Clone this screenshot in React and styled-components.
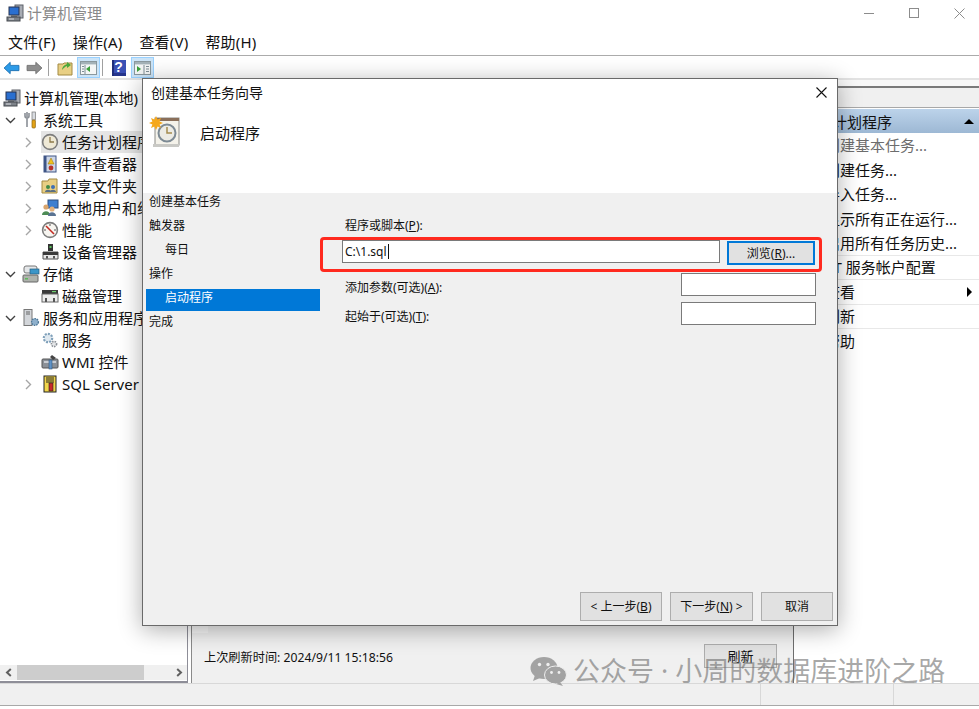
import React from 'react';
import styled, { createGlobalStyle } from 'styled-components';

const GlobalStyle = createGlobalStyle`
  html, body { margin: 0; padding: 0; background: #fff; }
  body { font-family: "Noto Sans", "Noto Sans CJK SC", sans-serif; color: #111; }
  * { box-sizing: border-box; }
`;

// icons
const ComputerIcon = () => (
  <svg width="18" height="18" viewBox="0 0 18 18">
    <rect x="9" y="1" width="8" height="13" fill="#a8acb4" stroke="#5c6068" />
    <rect x="3" y="3" width="10" height="8" fill="#2a6fd0" stroke="#27334f" />
    <rect x="5" y="11" width="6" height="2" fill="#6b7078" />
    <rect x="1" y="13" width="13" height="4" fill="#7e838a" stroke="#44484e" />
    <rect x="3" y="14.5" width="5" height="1" fill="#d8dade" />
  </svg>
);
const ToolsIcon = () => (
  <svg width="18" height="18" viewBox="0 0 18 18">
    <path d="M5 1v5M3 2v3a2 2 0 0 0 4 0V2M5 7v9" stroke="#8a8f96" strokeWidth="1.6" fill="none" />
    <rect x="10" y="1" width="3.4" height="8" fill="#d8dbe0" stroke="#777" strokeWidth=".7" />
    <rect x="10" y="9" width="3.4" height="8" rx="1" fill="#e3a316" stroke="#8c6410" strokeWidth=".7" />
  </svg>
);
const ClockIcon = () => (
  <svg width="18" height="18" viewBox="0 0 18 18">
    <circle cx="9" cy="9" r="7.4" fill="#efe9d6" stroke="#7d7d7d" strokeWidth="1.6" />
    <path d="M9 4v5h4" stroke="#8d7a4a" strokeWidth="1.3" fill="none" />
  </svg>
);
const EventIcon = () => (
  <svg width="18" height="18" viewBox="0 0 18 18">
    <rect x="3" y="1" width="12" height="16" fill="#cdd6e6" stroke="#3e5585" />
    <rect x="3" y="1" width="2.5" height="16" fill="#3e5585" />
    <path d="M10 3l3 6H7z" fill="#f1c11c" stroke="#93700d" strokeWidth=".5" />
    <circle cx="10" cy="13" r="2.4" fill="#b8332a" />
  </svg>
);
const ShareIcon = () => (
  <svg width="18" height="18" viewBox="0 0 18 18">
    <path d="M1 4h6l1-2h8v14H1z" fill="#e8cf84" stroke="#a38a42" />
    <circle cx="7" cy="10" r="2" fill="#3f8a47" />
    <circle cx="12" cy="10" r="2" fill="#3e6fb5" />
    <path d="M4 15c0-3 6-3 6 0zM9 15c0-3 6-3 6 0z" fill="#5a6f82" />
  </svg>
);
const UsersIcon = () => (
  <svg width="18" height="18" viewBox="0 0 18 18">
    <rect x="7" y="1" width="10" height="8" fill="#3e7fd0" stroke="#2d4f80" />
    <circle cx="5" cy="8" r="2.6" fill="#d9a56d" />
    <path d="M1 16c0-5 8-5 8 0z" fill="#4d8c55" />
    <circle cx="11" cy="10" r="2.6" fill="#e2b17c" />
    <path d="M7 17c0-5 8-5 8 0z" fill="#5a7392" />
  </svg>
);
const PerfIcon = () => (
  <svg width="18" height="18" viewBox="0 0 18 18">
    <circle cx="9" cy="9" r="7.4" fill="#f7f5f0" stroke="#7d7d7d" strokeWidth="1.6" />
    <path d="M5 5l8 8" stroke="#c22a22" strokeWidth="1.6" />
    <path d="M9 3v2M3 9h2M13 9h2" stroke="#555" />
  </svg>
);
const DeviceIcon = () => (
  <svg width="18" height="18" viewBox="0 0 18 18">
    <rect x="7" y="1" width="5" height="7" fill="#333" />
    <rect x="8.5" y="3" width="2" height="2" fill="#5bc35b" />
    <path d="M2 9h15v7H2z" fill="#e8e8e8" stroke="#555" />
    <rect x="2" y="9" width="15" height="3" fill="#3a3a3a" />
    <rect x="5" y="13" width="2" height="2.5" fill="#555" />
    <rect x="12" y="13" width="2" height="2.5" fill="#555" />
  </svg>
);
const StorageIcon = () => (
  <svg width="18" height="18" viewBox="0 0 18 18">
    <rect x="2" y="1" width="13" height="7" rx="2" fill="#e4e6e8" stroke="#777" />
    <rect x="8" y="4" width="9" height="5" fill="#3b96c8" stroke="#25607f" strokeWidth=".7" />
    <rect x="1" y="10" width="15" height="7" rx="1" fill="#aeb2ac" stroke="#666" />
    <rect x="3" y="13" width="3" height="1.5" fill="#5cba5c" />
  </svg>
);
const DiskIcon = () => (
  <svg width="18" height="18" viewBox="0 0 18 18">
    <rect x="1" y="3" width="16" height="4" fill="#3a3a3a" />
    <rect x="11" y="4" width="4" height="1.2" fill="#6fd06f" />
    <rect x="1" y="7" width="16" height="8" fill="#ededed" stroke="#666" />
    <rect x="4" y="11" width="2" height="4" fill="#555" />
    <rect x="12" y="11" width="2" height="4" fill="#555" />
  </svg>
);
const ServerAppIcon = () => (
  <svg width="18" height="18" viewBox="0 0 18 18">
    <rect x="2" y="0.5" width="8" height="16" fill="#d3d6da" stroke="#777" />
    <path d="M4 3h4M4 5h4" stroke="#666" />
    <circle cx="13" cy="13" r="3.4" fill="#8fb0cc" stroke="#4f7897" strokeWidth="1.4" strokeDasharray="1.5 1" />
  </svg>
);
const GearIcon = () => (
  <svg width="18" height="18" viewBox="0 0 18 18">
    <circle cx="7" cy="7" r="4.2" fill="#dfe8ef" stroke="#7fa0ba" strokeWidth="2.2" strokeDasharray="2 1.2" />
    <circle cx="13" cy="13" r="2.6" fill="#e4e6e8" stroke="#8a8f96" strokeWidth="1.6" strokeDasharray="1.5 1" />
  </svg>
);
const WmiIcon = () => (
  <svg width="18" height="18" viewBox="0 0 18 18">
    <rect x="1" y="6" width="16" height="9" rx="1" fill="#8b9097" stroke="#555" />
    <rect x="3" y="8" width="12" height="2" fill="#c8ccd2" />
    <path d="M11 2l4 3-3 2-3-3z" fill="#444" />
    <rect x="8" y="7" width="3" height="9" fill="#5f93c8" stroke="#33587e" strokeWidth=".6" />
  </svg>
);
const SqlIcon = () => (
  <svg width="18" height="18" viewBox="0 0 18 18">
    <rect x="3" y="1" width="12" height="16" fill="#f2d64b" stroke="#222" />
    <path d="M5 3h8M5 5h8M5 7h8" stroke="#222" />
    <rect x="8" y="8" width="4" height="8" fill="#c92a2a" stroke="#222" strokeWidth=".6" />
  </svg>
);
const WizardIcon = () => (
  <svg width="32" height="32" viewBox="0 0 32 32">
    <rect x="6" y="2" width="24" height="27" fill="#f4f2ea" stroke="#8c8c88" />
    <rect x="6" y="2" width="24" height="3" fill="#8a6f5a" />
    <rect x="4" y="28" width="26" height="3" fill="#c9c9c5" />
    <circle cx="18" cy="17" r="8.5" fill="#ecebe4" stroke="#7d8a94" strokeWidth="2" />
    <path d="M18 11v6h5" stroke="#a48c4e" strokeWidth="1.5" fill="none" />
    <path d="M7 0l1.6 3.4L12 2l-1.4 3.6L14 7l-3.4 1.4L12 12 8.6 10.4 7 14l-1.6-3.6L2 12l1.4-3.6L0 7l3.4-1.4L2 2l3.4 1.4z" fill="#f5a81c" />
  </svg>
);
const ArrowIcon = ({ $dir, $color, $edge }) => (
  <svg width="17" height="14" viewBox="0 0 19 16" style={{ transform: $dir === 'right' ? 'scaleX(-1)' : 'none' }}>
    <path d="M1 8l7-6.5V5h10v6H8v3.5z" fill={$color} stroke={$edge} />
  </svg>
);
const FolderUpIcon = () => (
  <svg width="16" height="16" viewBox="0 0 16 16">
    <path d="M1 4h5l1-1h8v12H1z" fill="#e8cf84" stroke="#a38a42" />
    <path d="M5 10c0-3 2-5 5-6V2l4 3-4 3V6c-2 .5-3 2-5 4z" fill="#4aa83c" />
  </svg>
);
const PaneIcon = ({ $color, $right }) => (
  <svg width="17" height="14" viewBox="0 0 17 14">
    <rect x=".5" y=".5" width="16" height="13" fill="#f4f6f6" stroke="#8a989e" />
    <rect x="1" y="1" width="15" height="2.4" fill="#a4b2b8" />
    <path d={$right ? 'M3 5v6l4-3z' : 'M10 5v6L6 8z'} fill={$color} />
    <path d={$right ? 'M10 4v9M12 5.5h3M12 8h3M12 10.5h3' : 'M2 5.5h2M2 8h2M2 10.5h2M5 4v9'} stroke="#7e8e96" />
  </svg>
);
const HelpIcon = () => (
  <svg width="14" height="16" viewBox="0 0 14 16">
    <rect width="14" height="16" fill="#3a50b4" />
    <rect width="2" height="16" fill="#1f2d7a" />
    <rect x="2" y="13" width="12" height="3" fill="#26358c" />
  </svg>
);
const ChevronRight = () => (
  <svg width="9" height="11" viewBox="0 0 9 11">
    <path d="M2 1l4.5 4.5L2 10" fill="none" stroke="#a6a6a6" strokeWidth="1.4" />
  </svg>
);
const ChevronDown = () => (
  <svg width="11" height="9" viewBox="0 0 11 9">
    <path d="M1 2l4.5 4.5L10 2" fill="none" stroke="#404040" strokeWidth="1.4" />
  </svg>
);
const ScrollArrow = ({ $left }) => (
  <svg width="7" height="9" viewBox="0 0 7 9">
    <path d={$left ? 'M5.8 1L2 4.5 5.8 8' : 'M1.2 1L5 4.5 1.2 8'} fill="none" stroke="#606060" strokeWidth="2" />
  </svg>
);
const WechatIcon = () => (
  <svg width="37" height="29" viewBox="0 0 37 29">
    <ellipse cx="14" cy="11" rx="13.5" ry="11" fill="#a3a3a3" />
    <path d="M5 18l-2 6 7-3z" fill="#a3a3a3" />
    <ellipse cx="25.5" cy="18" rx="11" ry="9" fill="#a3a3a3" stroke="#efefef" />
    <path d="M30 25l3 4-7-2z" fill="#a3a3a3" />
    <circle cx="9.5" cy="7.5" r="1.7" fill="#efefef" />
    <circle cx="18" cy="7.5" r="1.7" fill="#efefef" />
    <circle cx="21.5" cy="15.5" r="1.4" fill="#efefef" />
    <circle cx="29" cy="15.5" r="1.4" fill="#efefef" />
  </svg>
);

// data
const treeData = [
  { level: 0, Icon: ComputerIcon, label: '计算机管理(本地)' },
  { level: 1, Icon: ToolsIcon, label: '系统工具', toggle: 'open' },
  { level: 2, Icon: ClockIcon, label: '任务计划程序', toggle: 'closed', selected: true },
  { level: 2, Icon: EventIcon, label: '事件查看器', toggle: 'closed' },
  { level: 2, Icon: ShareIcon, label: '共享文件夹', toggle: 'closed' },
  { level: 2, Icon: UsersIcon, label: '本地用户和组', toggle: 'closed' },
  { level: 2, Icon: PerfIcon, label: '性能', toggle: 'closed' },
  { level: 2, Icon: DeviceIcon, label: '设备管理器' },
  { level: 1, Icon: StorageIcon, label: '存储', toggle: 'open' },
  { level: 2, Icon: DiskIcon, label: '磁盘管理' },
  { level: 1, Icon: ServerAppIcon, label: '服务和应用程序', toggle: 'open' },
  { level: 2, Icon: GearIcon, label: '服务' },
  { level: 2, Icon: WmiIcon, label: 'WMI 控件' },
  { level: 2, Icon: SqlIcon, label: 'SQL Server', toggle: 'closed' },
];

const actions = [
  { label: '创建基本任务...', disabled: true },
  { label: '创建任务...' },
  { label: '导入任务...' },
  { label: '显示所有正在运行...' },
  { label: '启用所有任务历史...', divider: true },
  { label: 'AT 服务帐户配置', divider: true },
  { label: '查看', more: true, divider: true },
  { label: '刷新', divider: true },
  { label: '帮助' },
];

const steps = [
  { label: '创建基本任务' },
  { label: '触发器' },
  { label: '每日', sub: true },
  { label: '操作' },
  { label: '启动程序', sub: true, active: true },
  { label: '完成' },
];

const App = () => {
  return (
    <Window>
      <GlobalStyle />
      <TitleBar>
        <ComputerIcon />
        <TitleText>计算机管理</TitleText>
        <WindowControls>
          <MinimizeGlyph />
          <MaximizeGlyph />
          <CloseGlyph>
            <svg width="11" height="11" viewBox="0 0 11 11">
              <path d="M.5.5l10 10M10.5.5l-10 10" stroke="currentColor" />
            </svg>
          </CloseGlyph>
        </WindowControls>
      </TitleBar>
      <MenuBar>
        <MenuItem>文件(F)</MenuItem>
        <MenuItem>操作(A)</MenuItem>
        <MenuItem>查看(V)</MenuItem>
        <MenuItem>帮助(H)</MenuItem>
      </MenuBar>
      <Toolbar>
        <ToolButton><ArrowIcon $color="#2d9be8" $edge="#1c6fb0" /></ToolButton>
        <ToolButton><ArrowIcon $dir="right" $color="#8e8e8e" $edge="#6e6e6e" /></ToolButton>
        <ToolSeparator />
        <ToolButton><FolderUpIcon /></ToolButton>
        <ToolButton $on $left={1}><PaneIcon $color="#3aa03a" /></ToolButton>
        <ToolSeparator />
        <ToolButton><HelpIcon /><HelpMark>?</HelpMark></ToolButton>
        <ToolButton $on $left={1}><PaneIcon $color="#3aa03a" $right /></ToolButton>
      </Toolbar>
      <Main>
        <TreePane>
          <TreeList>
            {treeData.map((item) => (
              <TreeRow key={item.label} $level={item.level}>
                {item.level > 0 && (
                  <ToggleSlot>
                    {item.toggle === 'open' && <ChevronDown />}
                    {item.toggle === 'closed' && <ChevronRight />}
                  </ToggleSlot>
                )}
                <TreeLabel $selected={item.selected}>
                  <item.Icon />
                  <span>{item.label}</span>
                </TreeLabel>
              </TreeRow>
            ))}
          </TreeList>
          <HScrollBar>
            <ScrollArrow $left />
            <HScrollThumb />
            <ScrollArrow />
          </HScrollBar>
        </TreePane>
        <CenterPane>
          <PaneBand />
          <CenterBody />
          <ListScroll>
            <ScrollStub />
          </ListScroll>
          <CenterFooter>
            <span>上次刷新时间: 2024/9/11 15:18:56</span>
            <RefreshButton>刷新</RefreshButton>
          </CenterFooter>
        </CenterPane>
        <ActionPane>
          <PaneBand />
          <ActionHeader>
            <span>任务计划程序</span>
            <UpTriangle />
          </ActionHeader>
          {actions.map((action) => (
            <ActionRow key={action.label} $disabled={action.disabled} $divider={action.divider}>
              <span>{action.label}</span>
              {action.more && <RightTriangle />}
            </ActionRow>
          ))}
        </ActionPane>
      </Main>
      <StatusBar>
        <StatusCell $width={761} />
        <StatusCell $width={133} />
        <StatusCell $width={85} />
      </StatusBar>

      <Dialog>
        <DialogHead>
          <DialogTitleRow>
            <span>创建基本任务向导</span>
            <DialogClose>
              <svg width="11" height="11" viewBox="0 0 11 11">
                <path d="M.5.5l10 10M10.5.5l-10 10" stroke="#111" strokeWidth="1.1" />
              </svg>
            </DialogClose>
          </DialogTitleRow>
          <DialogHeading>
            <WizardIcon />
            <HeadingText>启动程序</HeadingText>
          </DialogHeading>
        </DialogHead>
        <DialogBody>
          <StepList>
            {steps.map((step) => (
              <Step key={step.label} $sub={step.sub} $active={step.active}>{step.label}</Step>
            ))}
          </StepList>
          <FormArea>
            <FieldLabel $indent>程序或脚本(<u>P</u>):</FieldLabel>
            <Highlight>
              <PathInput>C:\1.sql<Caret /></PathInput>
              <BrowseButton>浏览(<u>R</u>)...</BrowseButton>
            </Highlight>
            <ArgRow $top={1}>
              <FieldLabel>添加参数(可选)(<u>A</u>):</FieldLabel>
              <ArgInput />
            </ArgRow>
            <ArgRow $top={6}>
              <FieldLabel>起始于(可选)(<u>T</u>):</FieldLabel>
              <ArgInput />
            </ArgRow>
          </FormArea>
        </DialogBody>
        <DialogFooter>
          <FooterButton $width={82}>&lt; 上一步(<u>B</u>)</FooterButton>
          <FooterButton $width={83}>下一步(<u>N</u>) &gt;</FooterButton>
          <FooterButton $width={72}>取消</FooterButton>
        </DialogFooter>
      </Dialog>

      <Watermark>
        <WechatIcon />
        <WatermarkText>公众号 · 小周的数据库进阶之路</WatermarkText>
      </Watermark>
    </Window>
  );
};

export default App;

const Window = styled.div`
  position: relative;
  width: 979px;
  height: 709px;
  overflow: hidden;
  display: flex;
  flex-direction: column;
  background: #fff;
`;

const TitleBar = styled.div`
  height: 28px;
  display: flex;
  align-items: center;
  padding: 0 0 2px 6px;
  gap: 3px;
`;

const TitleText = styled.div`
  font-size: 15px;
  line-height: 20px;
  color: #8a8a8a;
`;

const WindowControls = styled.div`
  margin-left: auto;
  display: flex;
  align-items: center;
  gap: 35px;
  padding-right: 14px;
  color: #8c8c8c;
`;

const MinimizeGlyph = styled.div`
  width: 10px;
  height: 1px;
  background: #8c8c8c;
`;

const MaximizeGlyph = styled.div`
  width: 10px;
  height: 10px;
  border: 1px solid #8c8c8c;
`;

const CloseGlyph = styled.div`
  display: flex;
`;

const MenuBar = styled.div`
  height: 28px;
  display: flex;
  align-items: center;
  padding-left: 8px;
  gap: 17px;
  border-bottom: 1px solid #ababab;
`;

const MenuItem = styled.div`
  font-size: 15px;
  line-height: 20px;
  letter-spacing: 0.2px;
  color: #111;
`;

const Toolbar = styled.div`
  height: 22px;
  display: flex;
  align-items: center;
  background: #fff;
`;

const ToolButton = styled.div`
  position: relative;
  width: 23px;
  height: 21px;
  margin-top: 1px;
  margin-left: ${(p) => p.$left || 0}px;
  display: flex;
  align-items: center;
  justify-content: center;
  background: ${(p) => (p.$on ? '#cce4f7' : 'transparent')};
  border: 1px solid ${(p) => (p.$on ? '#99d1ff' : 'transparent')};
`;

const HelpMark = styled.span`
  position: absolute;
  inset: 0;
  text-align: center;
  font-family: "Liberation Sans", sans-serif;
  font-weight: 700;
  font-size: 14px;
  line-height: 19px;
  color: #fff;
`;

const ToolSeparator = styled.div`
  width: 1px;
  height: 17px;
  background: #a0a0a0;
  margin: 0 4px 0 2px;
`;

const Main = styled.div`
  flex: 1;
  min-height: 0;
  display: flex;
  border-top: 2px solid #e3e3e3;
`;

const TreePane = styled.div`
  width: 188px;
  display: flex;
  flex-direction: column;
  border-right: 1px solid #8e8e98;
  border-bottom: 2px solid #8e8e98;
  overflow: hidden;
`;

const TreeList = styled.div`
  flex: 1;
  padding-top: 7px;
`;

const TreeRow = styled.div`
  height: 22px;
  display: flex;
  align-items: center;
  white-space: nowrap;
  font-size: 15px;
  padding-left: ${(p) => (p.$level === 0 ? 3 : p.$level === 1 ? 5 : 24)}px;
`;

const ToggleSlot = styled.div`
  width: 17px;
  flex-shrink: 0;
  display: flex;
`;

const TreeLabel = styled.div`
  flex-shrink: 0;
  display: flex;
  align-items: center;
  gap: 3px;
  height: 22px;
  padding-right: 4px;
  line-height: 20px;
  background: ${(p) => (p.$selected ? '#e5e5e5' : 'transparent')};
`;

const HScrollBar = styled.div`
  height: 15px;
  margin: 0 0 1px 0;
  padding: 0 4px 0 5px;
  display: flex;
  align-items: center;
  background: #f0f0f0;
`;

const HScrollThumb = styled.div`
  width: 127px;
  height: 15px;
  margin: 0 auto 0 5px;
  background: #cdcdcd;
`;

const CenterPane = styled.div`
  flex: 1;
  min-width: 0;
  margin-left: 3px;
  display: flex;
  flex-direction: column;
  background: #f0f0f0;
  border-left: 1px solid #8a8a8a;
  border-right: 1px solid #6e6e6e;
`;

const PaneBand = styled.div`
  height: 28px;
  flex-shrink: 0;
  background: linear-gradient(#f8f8f8 0, #f8f8f8 6px, #7a7a7a 6px, #7a7a7a 8px, #f0f0f0 8px, #f0f0f0 27px, #a8a8a8 27px, #a8a8a8 28px);
`;

const CenterBody = styled.div`
  flex: 1;
`;

const ListScroll = styled.div`
  height: 8px;
  display: flex;
`;

const ScrollStub = styled.div`
  width: 16px;
  background: #f8f8f8;
`;

const CenterFooter = styled.div`
  height: 50px;
  display: flex;
  align-items: flex-start;
  justify-content: space-between;
  padding: 11px 16px 0 12px;
  font-size: 12.2px;
  line-height: 28px;
`;

const RefreshButton = styled.div`
  width: 73px;
  height: 24px;
  background: #e1e1e1;
  border: 1px solid #adadad;
  font-size: 13px;
  line-height: 22px;
  text-align: center;
`;

const ActionPane = styled.div`
  width: 185px;
  display: flex;
  flex-direction: column;
`;

const ActionHeader = styled.div`
  height: 24px;
  flex-shrink: 0;
  display: flex;
  align-items: center;
  justify-content: space-between;
  padding: 1px 5px 0 8px;
  margin-top: 1px;
  font-size: 15px;
  line-height: 20px;
  background: linear-gradient(#bcd3ea, #9db8d4);
  color: #111;
`;

const UpTriangle = styled.div`
  width: 0;
  height: 0;
  border-left: 5px solid transparent;
  border-right: 5px solid transparent;
  border-bottom: 5px solid #000;
`;

const RightTriangle = styled.div`
  width: 0;
  height: 0;
  border-top: 5px solid transparent;
  border-bottom: 5px solid transparent;
  border-left: 5px solid #000;
`;

const ActionRow = styled.div`
  height: 24.5px;
  flex-shrink: 0;
  display: flex;
  align-items: center;
  justify-content: space-between;
  padding: 0 7px 0 31px;
  font-size: 15px;
  line-height: 20px;
  white-space: nowrap;
  color: ${(p) => (p.$disabled ? '#6d6d6d' : '#111')};
  border-bottom: ${(p) => (p.$divider ? '1px solid #e8e8e8' : 'none')};
`;

const StatusBar = styled.div`
  height: 23px;
  margin-bottom: 3px;
  display: flex;
  background: #f0f0f0;
  border-top: 1px solid #d8d8d8;
  border-bottom: 1px solid #a8a8a8;
`;

const StatusCell = styled.div`
  width: ${(p) => p.$width}px;
  border-right: 1px solid #d8d8d8;
  &:last-child { border-right: none; }
`;

const Dialog = styled.div`
  position: absolute;
  left: 142px;
  top: 78px;
  width: 696px;
  height: 548px;
  display: flex;
  flex-direction: column;
  background: #f0f0f0;
  border: 1px solid #6a6a6a;
  box-shadow: 0 4px 22px rgba(0, 0, 0, 0.32);
`;

const DialogHead = styled.div`
  height: 114px;
  background: #fff;
`;

const DialogTitleRow = styled.div`
  height: 28px;
  display: flex;
  align-items: center;
  justify-content: space-between;
  padding: 0 10px 0 8px;
  font-size: 14px;
  line-height: 28px;
`;

const DialogClose = styled.div`
  display: flex;
  margin-top: -2px;
`;

const DialogHeading = styled.div`
  display: flex;
  align-items: center;
  padding: 9px 0 0 6px;
`;

const HeadingText = styled.div`
  margin: 2px 0 0 19px;
  font-size: 15px;
  line-height: 20px;
`;

const DialogBody = styled.div`
  flex: 1;
  min-height: 0;
  display: flex;
`;

const StepList = styled.div`
  width: 177px;
  padding-left: 3px;
  display: flex;
  flex-direction: column;
  gap: 2px;
`;

const Step = styled.div`
  height: 22px;
  line-height: 18px;
  font-size: 12px;
  padding-left: ${(p) => (p.$sub ? 19 : 3)}px;
  ${(p) => p.$active && 'background: #0078d7; color: #fff;'}
`;

const FormArea = styled.div`
  flex: 1;
  padding-top: 25px;
  font-size: 12px;
`;

const FieldLabel = styled.div`
  font-size: 12px;
  line-height: 16px;
  padding-left: ${(p) => (p.$indent ? 25 : 0)}px;
`;

const Highlight = styled.div`
  width: 502px;
  height: 35px;
  margin-top: 3px;
  display: flex;
  align-items: flex-start;
  gap: 7px;
  padding: 0 0 0 19px;
  border: 3px solid #ff2a1f;
  border-radius: 4px;
`;

const PathInput = styled.div`
  width: 378px;
  height: 23px;
  padding-left: 2px;
  background: #fff;
  border: 1px solid #7a7a7a;
  font-size: 12px;
  line-height: 21px;
`;

const Caret = styled.span`
  display: inline-block;
  width: 1px;
  height: 15px;
  margin-left: 1px;
  vertical-align: -3px;
  background: #111;
`;

const BrowseButton = styled.div`
  width: 88px;
  height: 24px;
  margin-top: 1px;
  background: #e1e1e1;
  border: 2px solid #0078d7;
  font-size: 12px;
  line-height: 21px;
  text-align: center;
`;

const ArgRow = styled.div`
  width: 496px;
  height: 23px;
  margin-top: ${(p) => p.$top}px;
  display: flex;
  align-items: flex-end;
  justify-content: space-between;
  padding-left: 25px;
`;

const ArgInput = styled.div`
  width: 135px;
  height: 23px;
  background: #fff;
  border: 1px solid #7a7a7a;
`;

const DialogFooter = styled.div`
  height: 33px;
  display: flex;
  align-items: flex-start;
  gap: 8px;
  padding-left: 437px;
`;

const FooterButton = styled.div`
  flex-shrink: 0;
  width: ${(p) => p.$width}px;
  height: 29px;
  background: #e1e1e1;
  border: 1px solid #adadad;
  font-size: 12px;
  line-height: 27px;
  text-align: center;
  white-space: nowrap;
`;

const Watermark = styled.div`
  position: absolute;
  left: 530px;
  top: 656px;
  display: flex;
  align-items: center;
  gap: 6px;
  pointer-events: none;
`;

const WatermarkText = styled.div`
  font-size: 27px;
  line-height: 30px;
  color: rgba(110, 110, 110, 0.6);
  white-space: nowrap;
`;
